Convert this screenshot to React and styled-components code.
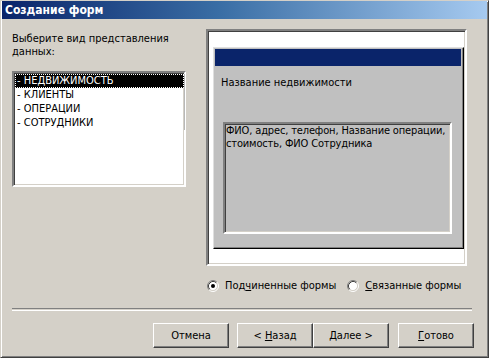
import styled, { createGlobalStyle } from "styled-components"

const UI_FONT = `"DejaVu Sans Condensed", "DejaVu Sans", "Noto Sans", sans-serif`

const GlobalStyle = createGlobalStyle`
  html, body {
    margin: 0;
    padding: 0;
    background: #d4d0c8;
  }
  body {
    font-family: ${UI_FONT};
    font-size: 11px;
    color: #000;
  }
`

const Window = styled.div`
  width: 489px;
  height: 358px;
  box-sizing: border-box;
  background: #d4d0c8;
  border: 1px solid;
  border-color: #d4d0c8 #404040 #404040 #d4d0c8;
  box-shadow: inset 1px 1px #ffffff, inset -1px -1px #808080;
  padding: 0 1px 1px 1px;
  display: flex;
  flex-direction: column;
`

const TitleBar = styled.div`
  height: 18px;
  background: linear-gradient(to right, #0a246a 0%, #3a6ea5 45%, #a6caf0 100%);
  display: flex;
  align-items: center;
  padding-left: 3px;
`

const TitleText = styled.span`
  color: #fff;
  font-weight: bold;
  font-size: 12px;
`

const Body = styled.div`
  display: flex;
  flex-direction: column;
  padding-left: 10px;
`

const TopRow = styled.div`
  display: flex;
  gap: 20px;
  margin-top: 10px;
`

const LeftColumn = styled.div`
  width: 174px;
  padding-top: 3px;
  display: flex;
  flex-direction: column;
`

const Prompt = styled.div`
  line-height: 13px;
`

const Sunken = styled.div`
  box-sizing: border-box;
  border: 2px solid;
  border-color: #808080 #ffffff #ffffff #808080;
  box-shadow: inset 1px 1px #404040, inset -1px -1px #d4d0c8;
`

const ListBox = styled(Sunken)`
  margin-top: 13px;
  height: 116px;
  background: #fff;
  padding: 1px 0 0 1px;
`

const ItemList = styled.div`
  width: 169px;
  border-right: 1px solid #b8b8b8;
`

const Item = styled.div`
  height: 14px;
  line-height: 12px;
  box-sizing: border-box;
  padding-left: 1px;
  white-space: nowrap;
  border: 1px dotted ${(p) => (p.$selected ? "#ffffff" : "transparent")};
  background: ${(p) => (p.$selected ? "#000" : "transparent")};
  color: ${(p) => (p.$selected ? "#fff" : "#000")};
`

const RightColumn = styled.div`
  display: flex;
  flex-direction: column;
`

const PreviewFrame = styled(Sunken)`
  width: 261px;
  height: 237px;
  background: #fff;
  padding: 16px 1px 0 5px;
`

const FormMock = styled.div`
  box-sizing: border-box;
  height: 202px;
  background: #c0c0c0;
  border: 1px solid;
  border-color: #dfdfdf #000 #000 #dfdfdf;
  box-shadow: inset -1px -1px #808080;
  padding: 1px 2px 0 1px;
`

const MockCaption = styled.div`
  height: 17px;
  background: #0a246a;
`

const MockField = styled.div`
  margin: 10px 0 0 6px;
  line-height: 13px;
`

const SubformBox = styled(Sunken)`
  margin: 33px 0 0 8px;
  width: 229px;
  height: 112px;
  padding: 0 0 0 1px;
  line-height: 13px;
  letter-spacing: -0.15px;
`

const RadioRow = styled.div`
  display: flex;
  align-items: center;
  height: 13px;
  margin-top: 13px;
  padding-left: 1px;
  gap: 11px;
`

const RadioOption = styled.label`
  display: flex;
  align-items: center;
  gap: 6px;
  white-space: nowrap;
`

const Key = styled.span`
  text-decoration: underline;
  text-underline-offset: 1px;
`

const Separator = styled.div`
  width: 460px;
  height: 1px;
  margin-top: 16px;
  border-top: 1px solid #808080;
  border-bottom: 1px solid #ffffff;
`

const ButtonRow = styled.div`
  display: flex;
  justify-content: flex-end;
  margin-top: 12px;
  padding-right: 13px;
`

const Button = styled.button`
  width: 76px;
  height: 25px;
  margin-left: ${(p) => p.$gap || 0}px;
  box-sizing: border-box;
  background: #d4d0c8;
  font-family: ${UI_FONT};
  font-size: 11px;
  color: #000;
  padding: 0;
  border: 1px solid;
  border-color: #ffffff #404040 #404040 #ffffff;
  box-shadow: inset -1px -1px #808080, inset 1px 1px #d4d0c8;
`

const Radio = ({ checked }) => (
  <svg width="12" height="12" viewBox="0 0 12 12">
    <circle cx="6" cy="6" r="4.5" fill="#fff" />
    <path d="M9.89 2.11 A5.5 5.5 0 0 0 2.11 9.89" stroke="#808080" fill="none" />
    <path d="M9.89 2.11 A5.5 5.5 0 0 1 2.11 9.89" stroke="#ffffff" fill="none" />
    <path d="M9.18 2.82 A4.5 4.5 0 0 0 2.82 9.18" stroke="#404040" fill="none" />
    <path d="M9.18 2.82 A4.5 4.5 0 0 1 2.82 9.18" stroke="#d4d0c8" fill="none" />
    {checked && <circle cx="6" cy="6" r="2" fill="#000" />}
  </svg>
)

const items = ["- НЕДВИЖИМОСТЬ", "- КЛИЕНТЫ", "- ОПЕРАЦИИ", "- СОТРУДНИКИ"]

export default function App() {
  return (
    <>
      <GlobalStyle />
      <Window>
        <TitleBar>
          <TitleText>Создание форм</TitleText>
        </TitleBar>
        <Body>
          <TopRow>
            <LeftColumn>
              <Prompt>
                Выберите вид представления
                <br />
                данных:
              </Prompt>
              <ListBox>
                <ItemList>
                  {items.map((name, i) => (
                    <Item key={name} $selected={i === 0}>
                      {name}
                    </Item>
                  ))}
                </ItemList>
              </ListBox>
            </LeftColumn>
            <RightColumn>
              <PreviewFrame>
                <FormMock>
                  <MockCaption />
                  <MockField>Название недвижимости</MockField>
                  <SubformBox>
                    ФИО, адрес, телефон, Название операции, стоимость, ФИО Сотрудника
                  </SubformBox>
                </FormMock>
              </PreviewFrame>
              <RadioRow>
                <RadioOption>
                  <Radio checked />
                  <span>
                    Под<Key>ч</Key>иненные формы
                  </span>
                </RadioOption>
                <RadioOption>
                  <Radio />
                  <span>
                    <Key>С</Key>вязанные формы
                  </span>
                </RadioOption>
              </RadioRow>
            </RightColumn>
          </TopRow>
          <Separator />
          <ButtonRow>
            <Button>Отмена</Button>
            <Button $gap={8}>
              &lt; <Key>Н</Key>азад
            </Button>
            <Button>
              <Key>Д</Key>алее &gt;
            </Button>
            <Button $gap={9}>
              <Key>Г</Key>отово
            </Button>
          </ButtonRow>
        </Body>
      </Window>
    </>
  )
}
